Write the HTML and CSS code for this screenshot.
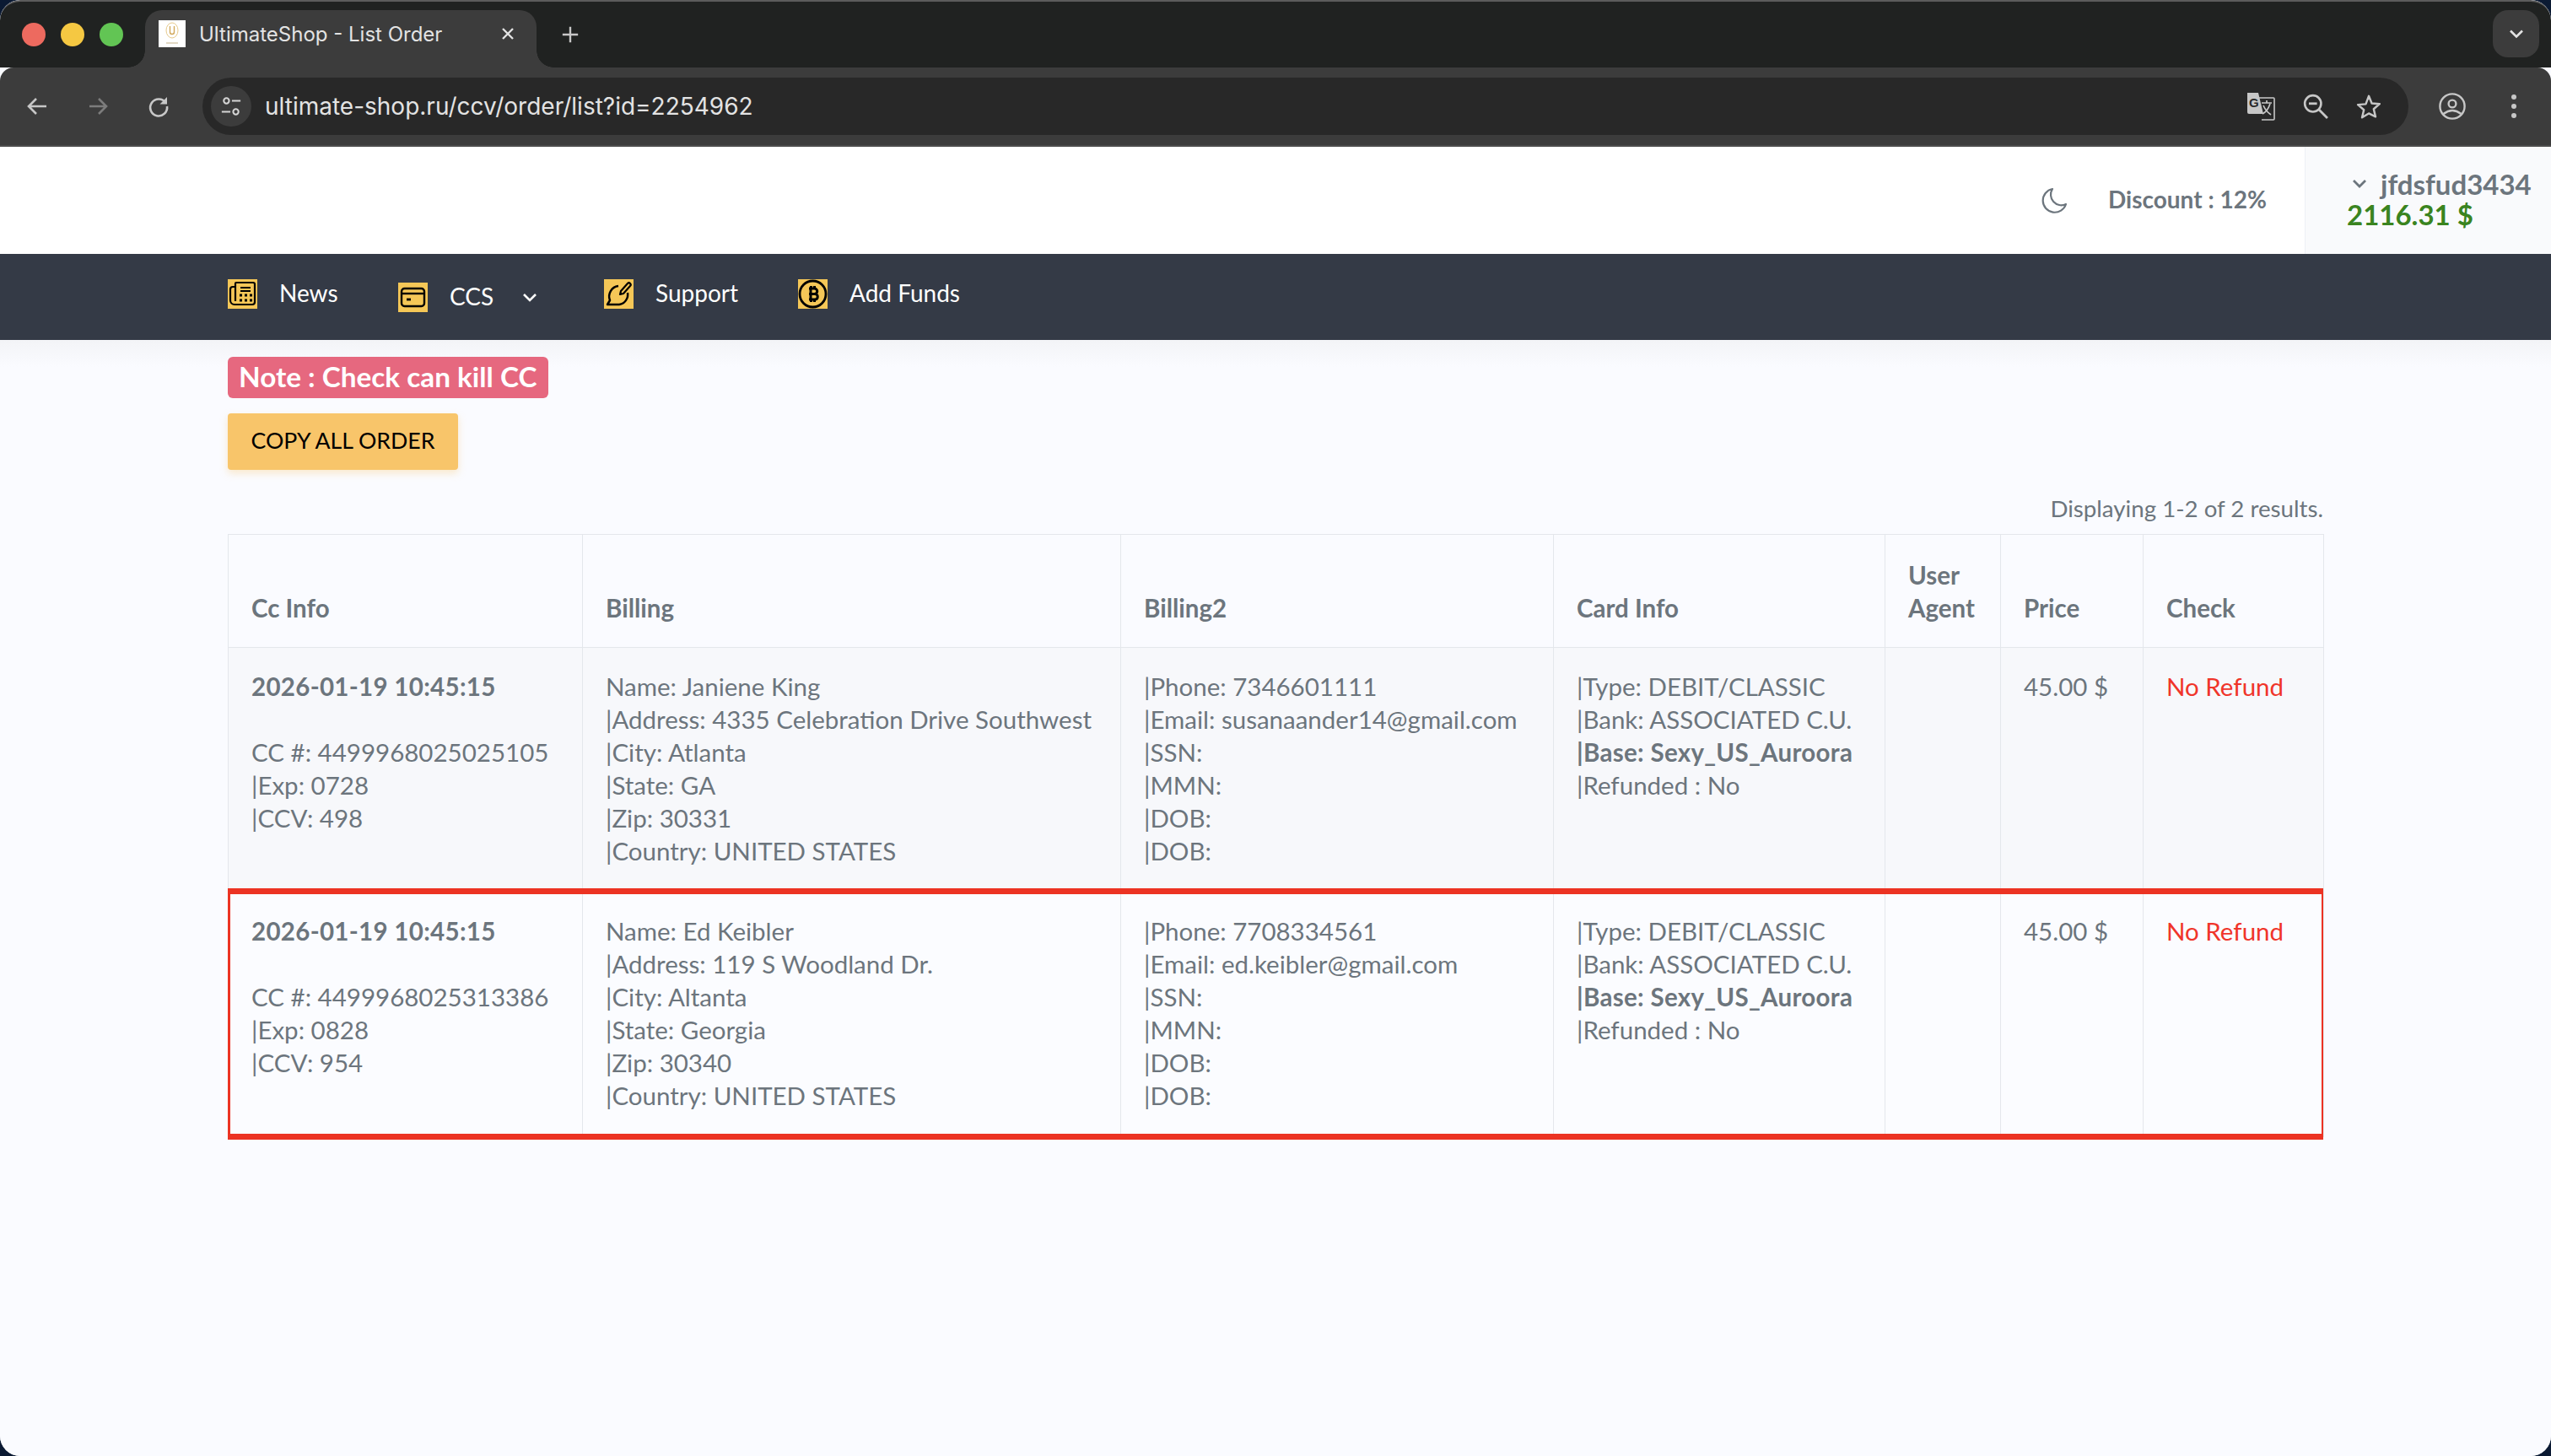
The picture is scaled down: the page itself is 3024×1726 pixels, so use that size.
FILE: index.html
```html
<!DOCTYPE html>
<html>
<head>
    <title>UltimateShop - List Order</title>
    <link rel="stylesheet" href="styles.css">
</head>
<body>
<div class="window">
    <div class="tabstrip">
        <div class="lights">
            <span class="light red"></span>
            <span class="light yellow"></span>
            <span class="light green"></span>
        </div>
        <div class="tab">
            <svg class="favicon" viewBox="0 0 32 32">
                <rect width="32" height="32" fill="#fff"/>
                <ellipse cx="16" cy="12" rx="7" ry="9" fill="none" stroke="#e6c98a" stroke-width="1"/>
                <path d="M13.500 7v7q0 2.500 2.500 2.500t2.500-2.500V7" fill="none" stroke="#d2a95c" stroke-width="1.400"/>
                <path d="M9 27h14" stroke="#d8cbb0" stroke-width="1.500"/>
            </svg>
            <span class="tab-title">UltimateShop - List Order</span>
            <svg class="tab-close" viewBox="0 0 20 20"><path d="M4 4l12 12M16 4L4 16" stroke="#e3e3e3" stroke-width="2.400"/></svg>
        </div>
        <svg class="new-tab" viewBox="0 0 24 24"><path d="M12 2v20M2 12h20" stroke="#c7c7c7" stroke-width="2.600"/></svg>
        <div class="tab-menu">
            <svg viewBox="0 0 20 20"><path d="M3 6.500l7 7 7-7" fill="none" stroke="#e3e3e3" stroke-width="2.600"/></svg>
        </div>
    </div>
    <div class="toolbar">
        <svg class="tool" viewBox="0 0 28 28"><path d="M25 14H5M13 5l-9 9 9 9" fill="none" stroke="#c7c7c7" stroke-width="2.600"/></svg>
        <svg class="tool" viewBox="0 0 28 28"><path d="M4 14h19M15 5l9 9-9 9" fill="none" stroke="#7c7c7c" stroke-width="2.600"/></svg>
        <svg class="tool" viewBox="0 0 28 28"><path d="M22.500 10A10 10 0 1 0 24 14" fill="none" stroke="#c7c7c7" stroke-width="2.600"/><path d="M24 3v8.500h-8.500z" fill="#c7c7c7"/></svg>
        <div class="omnibox">
            <div class="site-info">
                <svg viewBox="0 0 28 28">
                    <circle cx="8" cy="7" r="3.400" fill="none" stroke="#d5d5d5" stroke-width="2.200"/>
                    <path d="M15 7h11M2 21h11" stroke="#d5d5d5" stroke-width="2.400"/>
                    <circle cx="20" cy="21" r="3.400" fill="none" stroke="#d5d5d5" stroke-width="2.200"/>
                </svg>
            </div>
            <span class="url">ultimate-shop.ru/ccv/order/list?id=2254962</span>
            <div class="omni-icons">
                <svg class="translate" viewBox="0 0 34 34">
                    <path d="M14 7h18a1 1 0 0 1 1 1v24a1 1 0 0 1-1 1H18" fill="#282828" stroke="#c7c7c7" stroke-width="1.600"/>
                    <path d="M18 13h12M24 10v3M28 14q-3 9-9 12M20 16q3 7 9 11" fill="none" stroke="#c7c7c7" stroke-width="1.700"/>
                    <path d="M1 1h13l6 25H3a2 2 0 0 1-2-2z" fill="#c7c7c7"/>
                    <text x="3" y="18" class="translate-g">G</text>
                </svg>
                <svg class="omni-icon" viewBox="0 0 28 28"><circle cx="11" cy="11" r="9" fill="none" stroke="#c7c7c7" stroke-width="2.400"/><path d="M17.500 17.500L27 27" stroke="#c7c7c7" stroke-width="2.600"/><path d="M6.500 11h9" stroke="#c7c7c7" stroke-width="2.600"/></svg>
                <svg class="omni-icon" viewBox="0 0 32 32"><path d="M16 3l3.800 9.200 9.900.8-7.500 6.500 2.300 9.700L16 25l-8.500 5.200 2.300-9.700L2.300 14l9.900-.8z" fill="none" stroke="#c7c7c7" stroke-width="2.600" stroke-linejoin="round"/></svg>
            </div>
        </div>
        <svg class="profile" viewBox="0 0 32 32"><circle cx="16" cy="16" r="14.600" fill="none" stroke="#c7c7c7" stroke-width="2.400"/><circle cx="16" cy="13" r="4.400" fill="none" stroke="#c7c7c7" stroke-width="2.400"/><path d="M5.500 25q10.500-8 21 0" fill="none" stroke="#c7c7c7" stroke-width="2.400"/></svg>
        <div class="kebab"><span></span><span></span><span></span></div>
    </div>

    <div class="topbar">
        <svg class="moon" viewBox="0 0 34 34"><path d="M15 3A14 14 0 1 0 31 21 12.500 12.500 0 0 1 15 3z" fill="none" stroke="#6c757d" stroke-width="2.200" stroke-linejoin="round"/></svg>
        <span class="discount">Discount : 12%</span>
        <div class="account">
            <div class="account-name">
                <svg viewBox="0 0 18 12"><path d="M2 2l7 7 7-7" fill="none" stroke="#6c757d" stroke-width="2.800"/></svg>
                <span>jfdsfud3434</span>
            </div>
            <div class="balance">2116.31 $</div>
        </div>
    </div>

    <nav class="navbar">
        <a class="nav-item news">
            <svg class="nav-icon" viewBox="0 0 35 35">
                <path d="M9 8V5a1 1 0 0 1 1-1h20a2 2 0 0 1 2 2v21a3 3 0 0 1-3 3H8a5 5 0 0 1-5-5V12a3 3 0 0 1 3-3h3v17" fill="none" stroke="#000" stroke-width="2.200"/>
                <path d="M15 10h12M15 14h12" stroke="#000" stroke-width="2.200"/>
                <path d="M14 19h3M20 19h3M26 19h3M14 25h3M20 25h3M26 25h3" stroke="#000" stroke-width="3"/>
            </svg>
            <span>News</span>
        </a>
        <a class="nav-item ccs">
            <svg class="nav-icon" viewBox="0 0 35 35">
                <rect x="4" y="7" width="27" height="21" rx="3.500" fill="none" stroke="#000" stroke-width="2.400"/>
                <path d="M4 13h27" stroke="#000" stroke-width="2.400"/>
                <path d="M10 20h5" stroke="#000" stroke-width="2.800"/>
            </svg>
            <span>CCS</span>
            <svg class="nav-caret" viewBox="0 0 18 12"><path d="M2 2l7 7 7-7" fill="none" stroke="#fff" stroke-width="2.600"/></svg>
        </a>
        <a class="nav-item support">
            <svg class="nav-icon" viewBox="0 0 35 35">
                <path d="M17 8A12.500 12.500 0 0 0 7 25l-3 5h14A12 12 0 0 0 28 16" fill="none" stroke="#000" stroke-width="2.500" stroke-linejoin="round"/>
                <path d="M20 14l8-9a2 2 0 0 1 3 3l-8 9-4 1z" fill="none" stroke="#000" stroke-width="2.200" stroke-linejoin="round"/>
            </svg>
            <span>Support</span>
        </a>
        <a class="nav-item funds">
            <svg class="nav-icon" viewBox="0 0 35 35">
                <circle cx="17.500" cy="17.500" r="15.500" fill="none" stroke="#000" stroke-width="2.800"/>
                <path d="M13 11h6.500a3 3 0 0 1 0 6.500H13h7.500a3.300 3.300 0 0 1 0 6.500H13M15 11v13M15.500 8v3M19.500 8v3M15.500 24v3M19.500 24v3" fill="none" stroke="#000" stroke-width="3"/>
            </svg>
            <span>Add Funds</span>
        </a>
    </nav>

    <main class="content">
        <div class="note"><span class="note-badge">Note : Check can kill CC</span></div>
        <button class="copy-btn">COPY ALL ORDER</button>
        <div class="summary">Displaying 1-2 of 2 results.</div>
        <div class="table-wrap">
            <table class="orders">
                <colgroup>
                    <col class="col-cc"><col class="col-billing"><col class="col-billing2"><col class="col-card"><col class="col-agent"><col class="col-price"><col class="col-check">
                </colgroup>
                <thead>
                    <tr>
                        <th>Cc Info</th>
                        <th>Billing</th>
                        <th>Billing2</th>
                        <th>Card Info</th>
                        <th>User Agent</th>
                        <th>Price</th>
                        <th>Check</th>
                    </tr>
                </thead>
                <tbody>
                    <tr class="odd">
                        <td><b>2026-01-19 10:45:15</b><br><br>CC #: 4499968025025105<br>|Exp: 0728<br>|CCV: 498</td>
                        <td>Name: Janiene King<br>|Address: 4335 Celebration Drive Southwest<br>|City: Atlanta<br>|State: GA<br>|Zip: 30331<br>|Country: UNITED STATES</td>
                        <td>|Phone: 7346601111<br>|Email: susanaander14@gmail.com<br>|SSN:<br>|MMN:<br>|DOB:<br>|DOB:</td>
                        <td>|Type: DEBIT/CLASSIC<br>|Bank: ASSOCIATED C.U.<br><b>|Base: Sexy_US_Auroora</b><br>|Refunded : No</td>
                        <td></td>
                        <td>45.00 $</td>
                        <td class="no-refund">No Refund</td>
                    </tr>
                    <tr class="even">
                        <td><b>2026-01-19 10:45:15</b><br><br>CC #: 4499968025313386<br>|Exp: 0828<br>|CCV: 954</td>
                        <td>Name: Ed Keibler<br>|Address: 119 S Woodland Dr.<br>|City: Altanta<br>|State: Georgia<br>|Zip: 30340<br>|Country: UNITED STATES</td>
                        <td>|Phone: 7708334561<br>|Email: ed.keibler@gmail.com<br>|SSN:<br>|MMN:<br>|DOB:<br>|DOB:</td>
                        <td>|Type: DEBIT/CLASSIC<br>|Bank: ASSOCIATED C.U.<br><b>|Base: Sexy_US_Auroora</b><br>|Refunded : No</td>
                        <td></td>
                        <td>45.00 $</td>
                        <td class="no-refund">No Refund</td>
                    </tr>
                </tbody>
            </table>
            <div class="highlight"></div>
        </div>
    </main>
</div>
</body>
</html>
```

FILE: styles.css
```css
* { box-sizing: border-box; }
html, body { margin: 0; height: 100%; }
body { background-color: #0b1a33; overflow: hidden; }

.window {
    width: 3024px; height: 1726px;
    display: flex; flex-direction: column;
    background-color: #fafbff;
    border-radius: 24px; overflow: hidden;
    font-family: "Lato", "Noto Sans", sans-serif;
    color: #6c757d;
}

/* browser chrome */
.tabstrip {
    height: 80px; flex: none;
    display: flex; align-items: flex-start;
    background-color: #202221;
    border-top: 2px solid #5c5c5c;
    border-radius: 24px 24px 0 0;
}
.lights { width: 172px; height: 78px; flex: none; display: flex; gap: 18px; padding: 25px 0 0 26px; }
.light { width: 28px; height: 28px; border-radius: 50%; }
.red { background-color: #ed6a5f; }
.yellow { background-color: #f5c842; }
.green { background-color: #62c554; }

.tab {
    width: 464px; height: 68px; margin-top: 10px;
    display: flex; align-items: center;
    background-color: #3c3c3c;
    border-radius: 20px 20px 0 0;
    padding: 0 24px 12px 16px;
    position: relative;
}
.tab::before, .tab::after {
    content: ""; position: absolute; bottom: 0;
    width: 20px; height: 20px;
}
.tab::before { left: -20px; background: radial-gradient(circle at 0 0, #202221 19.500px, #3c3c3c 20px); }
.tab::after { right: -20px; background: radial-gradient(circle at 100% 0, #202221 19.500px, #3c3c3c 20px); }
.favicon { width: 32px; height: 32px; flex: none; }
.tab-title {
    margin-left: 16px; flex: 1;
    font-family: "Inter", sans-serif; font-size: 24px; color: #e3e3e3;
    white-space: nowrap;
}
.tab-close { width: 20px; height: 20px; flex: none; }
.new-tab { width: 22px; height: 22px; margin: 28px 0 0 29px; flex: none; }
.tab-menu {
    width: 55px; height: 56px; margin: 10px 14px 0 auto;
    display: flex; align-items: center; justify-content: center;
    background-color: #3c3c3c; border-radius: 18px;
}
.tab-menu svg { width: 20px; height: 20px; }

.toolbar {
    height: 94px; flex: none;
    display: flex; align-items: center;
    background-color: #3c3c3c;
    border-bottom: 2px solid #4c4c4c;
    border-radius: 16px 16px 0 0;
    padding: 0 0 0 30px;
}
.tool { width: 28px; height: 28px; flex: none; margin-right: 44px; }
.omnibox {
    width: 2615px; height: 68px; margin-left: -6px; flex: none;
    display: flex; align-items: center;
    background-color: #282828;
    border-radius: 34px;
    padding: 0 32px 0 10px;
}
.site-info {
    width: 48px; height: 48px; flex: none;
    display: flex; align-items: center; justify-content: center;
    background-color: #3c3c3c; border-radius: 50%;
}
.site-info svg { width: 26px; height: 26px; }
.url {
    margin-left: 16px;
    font-family: "Inter", sans-serif; font-size: 28px; color: #e3e3e3;
    white-space: nowrap;
}
.omni-icons { margin-left: auto; display: flex; align-items: center; gap: 33px; }
.translate { width: 34px; height: 34px; }
.translate-g { font-family: "Liberation Sans", sans-serif; font-size: 15px; font-weight: bold; fill: #282828; }
.omni-icon { width: 30px; height: 30px; }
.profile { width: 32px; height: 32px; flex: none; margin-left: 36px; }
.kebab { margin-left: 54px; display: flex; flex-direction: column; gap: 5px; }
.kebab span { width: 6px; height: 6px; border-radius: 50%; background-color: #c7c7c7; }

/* page header */
.topbar {
    height: 127px; flex: none;
    display: flex; align-items: center;
    background-color: #fff;
}
.moon { width: 34px; height: 34px; margin-left: 2418px; flex: none; }
.discount { margin: -4px 0 0 47px; width: 233px; font-size: 28px; font-weight: 700; white-space: nowrap; }
.account {
    flex: 1; height: 100%;
    background-color: #f9fafc;
    border-left: 1px solid #eef0f5;
    padding: 26px 0 0 49px;
    font-size: 33px; font-weight: 700;
    line-height: 36px;
}
.account-name { display: flex; align-items: center; padding-left: 6px; white-space: nowrap; }
.account-name svg { width: 18px; height: 12px; margin-right: 16px; }
.balance { color: #3a841f; }

.navbar {
    height: 102px; flex: none;
    display: flex; align-items: flex-start;
    background-color: #343a46;
    padding-left: 270px;
    color: #fff; font-size: 28px;
}
.nav-item { display: flex; align-items: center; height: 35px; margin-top: 30px; white-space: nowrap; }
.nav-item span { margin: -3px 0 0 26px; }
.nav-icon { width: 35px; height: 35px; background-color: #f5c757; flex: none; }
.news { width: 202px; }
.ccs { width: 244px; margin-top: 34px; }
.nav-caret { width: 18px; height: 12px; margin-left: 34px; }
.support { width: 230px; }

/* content */
.content {
    flex: 1; padding: 20px 270px 0;
    background: linear-gradient(#f3f4f7, #fafbff 32px);
}
.note { height: 49px; }
.note-badge {
    display: inline-block; height: 49px;
    padding: 0 13px;
    background-color: #e6687f; border-radius: 6px;
    color: #fff; font-size: 33.300px; font-weight: 700; line-height: 47px;
    white-space: nowrap;
}
.copy-btn {
    display: block; width: 273px; height: 67px; margin-top: 18px; padding: 0 0 3px;
    background-color: #f8c56a; color: #000;
    border: 0; border-radius: 4px;
    box-shadow: 0 4px 10px rgba(248, 197, 106, 0.35);
    font-family: inherit; font-size: 26.700px;
}
.summary { margin-top: 28px; height: 48px; text-align: right; font-size: 27.700px; line-height: 36px; }

.table-wrap { position: relative; }
.orders {
    width: 2484px; table-layout: fixed; border-collapse: collapse;
    font-size: 29.500px; line-height: 39px;
}
.col-cc { width: 420px; }
.col-billing { width: 638px; }
.col-billing2 { width: 513px; }
.col-card { width: 393px; }
.col-agent { width: 137px; }
.col-price { width: 169px; }
.col-check { width: 214px; }
.orders th, .orders td { border: 1px solid #e4e7ec; padding: 26px 27px; vertical-align: top; text-align: left; }
.orders th { vertical-align: bottom; height: 134px; font-weight: 700; padding: 26px 27px 27px; }
.orders b { font-weight: 700; letter-spacing: 0.300px; }
.odd td { height: 290px; background-color: #f7f8fb; }
.even td { height: 290px; background-color: #fbfcff; }
.no-refund { color: #f0352a; }

/* red box drawn over the second row */
.highlight {
    position: absolute; left: 0; top: 420px;
    width: 2484px; height: 298px;
    border: solid #ec3323;
    border-width: 7px 2px 7px 3px;
}
```
